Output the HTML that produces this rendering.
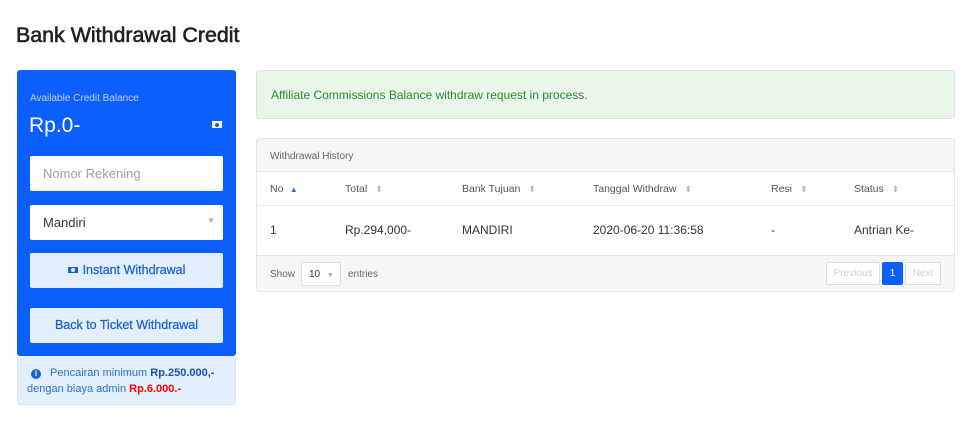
<!DOCTYPE html>
<html><head><style>
*{box-sizing:border-box;margin:0;padding:0}
body{width:972px;height:428px;background:#fff;font-family:"Liberation Sans",sans-serif;color:#333;position:relative;overflow:hidden}
.a{position:absolute}
h1{position:absolute;left:16px;top:23px;font-size:21.4px;font-weight:normal;color:#222;-webkit-text-stroke:0.6px #222}
.card{left:17px;top:70px;width:219px;height:286px;background:#0d5ffd;border-radius:3px}
.note{left:17px;top:356px;width:219px;height:49px;background:#e3effd;border:1px solid #d6e4f5;border-top:none;border-radius:0 0 3px 3px;font-size:11px;color:#2a6fd1;line-height:16px;padding:9px 0 0 9px}
.inp{left:30px;width:193px;height:35px;background:#fff;border-radius:2px;font-size:13px;padding:10px 0 0 13px}
.btn{left:30px;width:193px;height:35px;background:#e3effd;border-radius:2px;font-size:12.5px;color:#1a62d6;text-align:center;line-height:35px;-webkit-text-stroke:0.25px #1a62d6}
.bill{display:inline-block;width:10px;height:6px;background:#1a62d6;position:relative;margin-right:5px;vertical-align:1px}
.bill:after{content:"";position:absolute;left:3px;top:1px;width:4px;height:4px;border-radius:50%;background:#e3effd}
.s{color:#bbb;font-size:9px;margin-left:8px}
</style></head><body>
<h1>Bank Withdrawal Credit</h1>
<div class="a card"></div>
<div class="a" style="left:30px;top:93px;font-size:10px;color:#b9cffd">Available Credit Balance</div>
<div class="a" style="left:29px;top:114px;font-size:21px;color:#fff">Rp.0-</div>
<div class="a" style="left:212px;top:121px;width:10px;height:7px;background:#fff"><div class="a" style="left:3px;top:1.5px;width:4px;height:4px;border-radius:50%;background:#0d5ffd"></div></div>
<div class="a inp" style="top:156px;color:#a0a0a0">Nomor Rekening</div>
<div class="a inp" style="top:205px;color:#333">Mandiri<span style="position:absolute;right:8px;top:11px;font-size:8px;color:#aaa">▼</span></div>
<div class="a btn" style="top:253px"><span class="bill"></span>Instant Withdrawal</div>
<div class="a btn" style="top:308px">Back to Ticket Withdrawal</div>
<div class="a note"><span style="display:inline-block;width:10px;height:10px;border-radius:50%;background:#1a62d6;color:#fff;font-size:8px;text-align:center;line-height:10px;font-weight:bold;margin:0 9px 0 4px">i</span>Pencairan minimum <b style="color:#1a4fb0">Rp.250.000,-</b><br>dengan biaya admin <b style="color:#f00">Rp.6.000.-</b></div>

<div class="a" style="left:256px;top:70px;width:699px;height:49px;background:#eaf6ea;border:1px solid #d4ecd4;border-radius:3px;color:#2d8a2d;font-size:12px;padding:17px 0 0 14px">Affiliate Commissions Balance withdraw request in process.</div>

<div class="a" style="left:256px;top:138px;width:699px;height:154px;border:1px solid #e3e6ea;border-radius:3px;background:#f5f6f8;overflow:hidden">
<div style="height:33px;font-size:10px;color:#666;padding:12px 0 0 13px;border-bottom:1px solid #e3e6ea">Withdrawal History</div>
<div style="background:#fff;height:83px;position:relative;font-size:12px">
<div style="height:34px;border-bottom:1px solid #e8e8e8;font-size:10.5px;color:#555;position:relative">
<span class="a" style="left:13px;top:11px">No<span class="s" style="color:#1a62d6">▴</span></span>
<span class="a" style="left:88px;top:11px">Total<span class="s">⬍</span></span>
<span class="a" style="left:205px;top:11px">Bank Tujuan<span class="s">⬍</span></span>
<span class="a" style="left:336px;top:11px">Tanggal Withdraw<span class="s">⬍</span></span>
<span class="a" style="left:514px;top:11px">Resi<span class="s">⬍</span></span>
<span class="a" style="left:597px;top:11px">Status<span class="s">⬍</span></span>
</div>
<span class="a" style="left:13px;top:51px">1</span>
<span class="a" style="left:88px;top:51px">Rp.294,000-</span>
<span class="a" style="left:205px;top:51px">MANDIRI</span>
<span class="a" style="left:336px;top:51px">2020-06-20 11:36:58</span>
<span class="a" style="left:514px;top:51px">-</span>
<span class="a" style="left:597px;top:51px">Antrian Ke-</span>
</div>
<div style="border-top:1px solid #e3e6ea;position:relative;height:37px;font-size:10px;color:#666">
<span class="a" style="left:13px;top:13px">Show</span>
<span class="a" style="left:44px;top:6px;width:40px;height:24px;background:#fff;border:1px solid #ddd;border-radius:2px;padding:6px 0 0 7px;color:#333">10 <span style="color:#aaa;font-size:7px;margin-left:4px">▼</span></span>
<span class="a" style="left:91px;top:13px">entries</span>
<span class="a" style="left:569px;top:6px;width:54px;height:23px;background:#fff;border:1px solid #ddd;border-radius:2px;color:#ccc;text-align:center;line-height:21px">Previous</span>
<span class="a" style="left:625px;top:6px;width:21px;height:23px;background:#0d5ffd;border-radius:2px;color:#fff;text-align:center;line-height:23px">1</span>
<span class="a" style="left:648px;top:6px;width:36px;height:23px;background:#fff;border:1px solid #ddd;border-radius:2px;color:#ccc;text-align:center;line-height:21px">Next</span>
</div>
</div>
</body></html>
